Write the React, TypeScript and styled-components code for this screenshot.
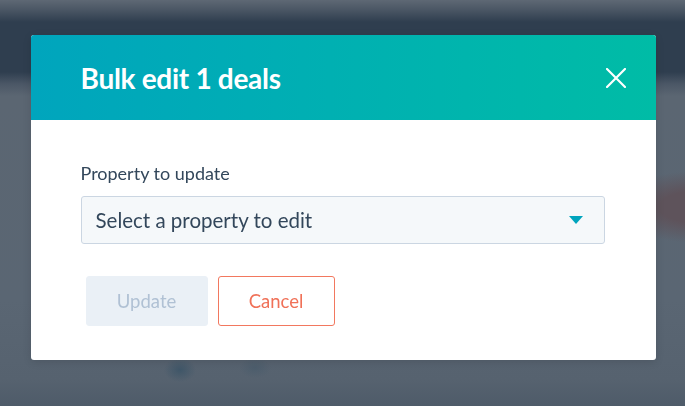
import React from 'react'
import styled, { createGlobalStyle } from 'styled-components'

const GlobalStyle = createGlobalStyle`
  html, body {
    margin: 0;
    padding: 0;
    width: 100%;
    height: 100%;
    overflow: hidden;
  }
  body {
    font-family: Lato, "Open Sans", "Liberation Sans", sans-serif;
    background: #5b6774;
  }
`

// blurred page behind the dialog
const Backdrop = styled.div`
  height: 406px;
  background:
    radial-gradient(ellipse 90px 36px at 700px 207px, #5e535b 0%, #5e535b 45%, rgba(94, 83, 91, 0) 100%),
    radial-gradient(ellipse 16px 12px at 180px 370px, #3f5668 0%, rgba(63, 86, 104, 0) 100%),
    radial-gradient(ellipse 16px 10px at 255px 368px, #4c5d6c 0%, rgba(76, 93, 108, 0) 100%),
    linear-gradient(
      to bottom,
      #5e6874 0px,
      #4a5664 10px,
      #2f3e4f 22px,
      #2f3e4f 72px,
      #4b5766 84px,
      #5b6672 96px,
      #5a6673 300px,
      #56626f 380px,
      #4e5b69 406px
    );
`

const Overlay = styled.div`
  position: fixed;
  inset: 0;
  display: flex;
  justify-content: center;
  align-items: flex-start;
  padding-top: 35px;
`

const Modal = styled.div`
  width: 625px;
  margin-left: 1px;
  background: #ffffff;
  border-radius: 3px;
  overflow: hidden;
  box-shadow: 0 2px 8px rgba(0, 0, 0, 0.12);
`

const Header = styled.div`
  height: 85px;
  display: flex;
  align-items: center;
  justify-content: space-between;
  padding: 0 30px 0 50px;
  box-sizing: border-box;
  background: linear-gradient(to right, #00a5bd, #00bca6);
`

const Title = styled.h3`
  margin: 0;
  color: #ffffff;
  font-size: 28px;
  font-weight: 700;
  letter-spacing: -0.3px;
`

const CloseButton = styled.button`
  width: 20px;
  height: 20px;
  padding: 0;
  border: 0;
  background: none;
  display: flex;
  cursor: pointer;
`

const Body = styled.div`
  padding: 40px 51px 34px 50px;
  display: flex;
  flex-direction: column;
`

const Label = styled.label`
  color: #33475b;
  font-size: 18px;
  line-height: 26px;
  margin-bottom: 10px;
`

const Select = styled.div`
  height: 48px;
  box-sizing: border-box;
  display: flex;
  align-items: center;
  justify-content: space-between;
  padding: 0 21px 0 14px;
  background: #f5f8fa;
  border: 1px solid #cbd6e2;
  border-radius: 3px;
  color: #33475b;
  font-size: 20.5px;
`

const Footer = styled.div`
  display: flex;
  gap: 10px;
  margin-top: 32px;
  padding-left: 5px;
`

const Button = styled.button<{ $variant: 'disabled' | 'secondary' }>`
  height: 50px;
  box-sizing: border-box;
  padding: 0;
  width: ${(p) => (p.$variant === 'disabled' ? '122px' : '117px')};
  border-radius: 3px;
  font-family: inherit;
  font-size: 18.5px;
  border: 1px solid
    ${(p) => (p.$variant === 'disabled' ? '#eaf0f6' : '#f2785f')};
  background: ${(p) => (p.$variant === 'disabled' ? '#eaf0f6' : '#ffffff')};
  color: ${(p) => (p.$variant === 'disabled' ? '#b0c1d4' : '#f07158')};
`

const App: React.FC = () => {
  return (
    <>
      <GlobalStyle />
      <Backdrop />
      <Overlay>
        <Modal>
          <Header>
            <Title>Bulk edit 1 deals</Title>
            <CloseButton aria-label='Close'>
              <svg width='20' height='20' viewBox='0 0 20 20'>
                <path
                  d='M1 1 L19 19 M19 1 L1 19'
                  stroke='#ffffff'
                  strokeWidth='2.2'
                  strokeLinecap='square'
                />
              </svg>
            </CloseButton>
          </Header>
          <Body>
            <Label>Property to update</Label>
            <Select>
              <span>Select a property to edit</span>
              <svg width='14' height='8' viewBox='0 0 14 8'>
                <path d='M0 0 L14 0 L7 8 Z' fill='#00a4bd' />
              </svg>
            </Select>
            <Footer>
              <Button $variant='disabled' disabled>
                Update
              </Button>
              <Button $variant='secondary'>Cancel</Button>
            </Footer>
          </Body>
        </Modal>
      </Overlay>
    </>
  )
}

export default App
